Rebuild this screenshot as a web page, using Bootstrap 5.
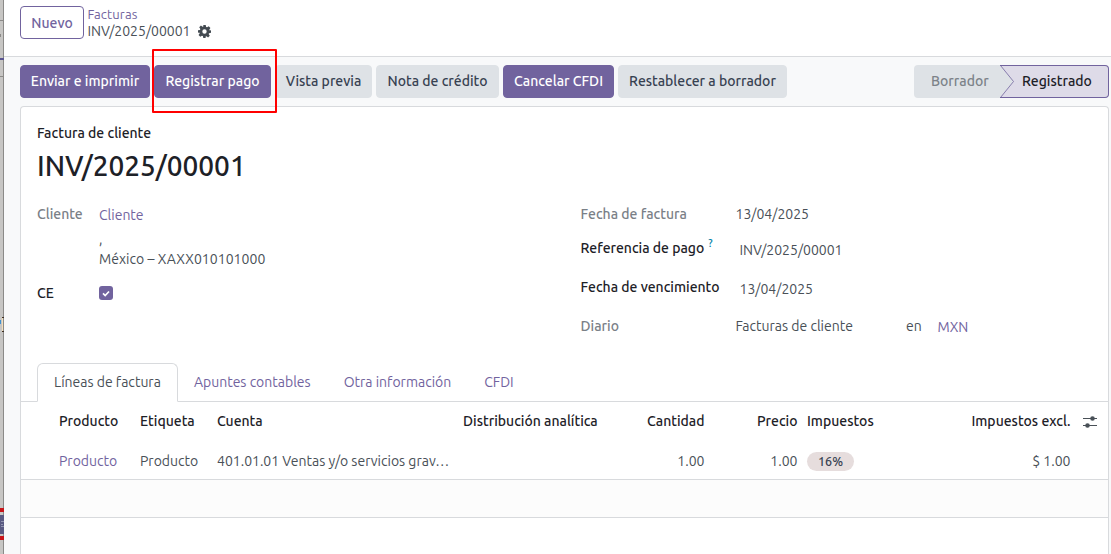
<!DOCTYPE html>
<html lang="es">
<head>
<meta charset="utf-8">
<meta name="viewport" content="width=device-width, initial-scale=1">
<title>INV/2025/00001</title>
<link href="https://cdn.jsdelivr.net/npm/bootstrap@5.3.0/dist/css/bootstrap.min.css" rel="stylesheet">
<style>
:root{--brand:#71639e;--line:#d8dadd;--muted:#495057}
body{font-family:Ubuntu,"Noto Sans","Open Sans",sans-serif;font-size:14px;line-height:21px;color:var(--muted);height:554px;overflow:hidden;background:#f8f9fa}
a{color:var(--brand);text-decoration:none}
svg{display:block;flex:none}
.strip{width:4px;height:554px}
.topbar{height:57px;border-bottom:1px solid var(--line);padding:6px 16px}
.crumbs{line-height:16px;padding:1px 0 0 3.5px}
.crumb-up{font-size:13px;line-height:15px;padding-bottom:1px;letter-spacing:.15px}
.gear{margin-left:7px}
.btn{--bs-btn-padding-x:0;--bs-btn-padding-y:0;--bs-btn-font-size:14px;--bs-btn-line-height:21px;--bs-btn-border-radius:4px;height:33px;font-weight:500}
.btn-new{--bs-btn-color:#71639e;--bs-btn-border-color:#71639e;--bs-btn-bg:#fff;width:64px;padding-top:1px}
.btn-brand{--bs-btn-color:#fff;--bs-btn-bg:#71639e;--bs-btn-border-color:#71639e}
.btn-grey{--bs-btn-color:#374151;--bs-btn-bg:#dee2e6;--bs-btn-border-color:#dee2e6}
.actions{padding:8px 2px 8px 16px;height:49px}
.w130{width:130px}.w117{width:117px}.w97{width:97px}.w123{width:123px}.w111{width:111px}.w169{width:169px}
.focusbox{left:-2px;top:-16px;width:125px;height:64px;border:2px solid #f00;border-radius:1px;z-index:3}
.step-off{width:86px;background:#dee2e6;border-radius:4px 0 0 4px;color:#7c8289;padding-left:17px;font-weight:500}
.step-on{width:95px;border:1px solid var(--brand);border-left:0;border-radius:0 4px 4px 0;background:#dedbe8;color:#1d2127;font-weight:500;padding-left:8px}
.step-off,.step-on{height:33px}
.sheet{margin:0 2px 0 16px;height:460px;border:1px solid var(--line);border-bottom:0;border-radius:4px 4px 0 0;background:#fff}
.ink{color:#1d2127;font-weight:500}
.dim{color:#7a8087;font-weight:500}
.doc-title{font-size:28px;line-height:36px;font-weight:500;color:#1d2127;margin:0}
.head-pad{padding:16px 16px 0}
.form-cols{padding:16px 16px 0;height:175px}
.left-col{width:543.5px}
.lab-l{width:62px;flex:none}
.lab-r{width:155px;flex:none}
.frow{height:39px}
.r1{height:34px}
.nudge{padding-top:2px}
.street{margin-top:3px}
.addr{margin-top:-1px;letter-spacing:.04px}
.ce{margin-top:13px}
.journal{width:170.5px}
.inword{width:31.5px}
.cur,.partner{padding-top:1px}
.qm{color:#0180a5;font-size:10.5px;top:-6px}
.tick{width:14px;height:14px;border-radius:3px;background:var(--brand);margin-top:-1px}
.nav-tabs{--bs-nav-tabs-border-color:#d8dadd;--bs-nav-tabs-link-active-border-color:#d8dadd #d8dadd #fff;--bs-nav-tabs-link-active-color:#495057;--bs-nav-link-color:#71639e;--bs-nav-link-padding-x:16px;--bs-nav-link-padding-y:8px;height:39px;padding:0 16px;flex-wrap:nowrap}
.nav-tabs .nav-link{height:39px}
.nav-tabs .nav-item{margin-right:-1px}
.lines{table-layout:fixed;--bs-table-color:#495057;--bs-table-bg:transparent;margin:0;width:1087px}
.lines>*>tr>*{padding:0 5px;height:38px;border:0;vertical-align:middle;white-space:nowrap}
.lines>*>tr>.text-end{padding-right:4.5px}
.lines th{font-weight:500;color:#1d2127}
.lines>tbody>tr>td{border-bottom:1px solid var(--line);height:39px;padding-top:4px}
.lines>tfoot>tr>td{background:#fcfcfc;height:38px;border-bottom:1px solid var(--line)}
.opts{margin:3px 0 0 3px}
.tax{display:flex;align-items:center;justify-content:center;width:47px;height:19px;border-radius:10px;background:#e6dddd;color:#374151;font-size:12.5px;font-weight:500}
.cw1{width:33px}.cw2{width:81px}.cw3{width:77px}.cw4{width:246px}.cw5{width:151px}.cw6{width:100px}.cw7{width:93px}.cw8{width:98px}.cw9{width:175px}.cw10{width:33px}
</style>
</head>
<body class="d-flex">
<svg class="strip" width="4" height="554" viewBox="0 0 4 554"><path fill="#c7c6c4" d="M0 0h4v554H0z"/><path fill="#8b8a88" d="M3 0h1v554H3zM0 20h3v1H0zM0 76h3v1H0zM0 34h1v3H0z"/><path fill="#595490" d="M0 58h4v2H0z"/><path fill="#3e91ce" d="M0 320h1v4H0z"/><path fill="#f3dfbb" d="M2 318h1v13H2z"/><path fill="#3e2f23" d="M2 317h2v1H2zM2 331h2v1H2z"/><path fill="#c71519" d="M0 508h4v4H0zM0 536h4v4H0z"/><path fill="#595a82" d="M0 515h4v19H0z"/><path fill="#9194af" d="M1 521h3v1H1zM1 524h2v1H1zM1 526h3v1H1z"/></svg>
<main class="flex-grow-1">
  <header class="topbar bg-white d-flex align-items-start">
    <button class="btn btn-new">Nuevo</button>
    <div class="crumbs">
      <div class="crumb-up"><a href="#">Facturas</a></div>
      <div class="d-flex align-items-center">INV/2025/00001
      <svg class="gear" width="13" height="13" viewBox="0 0 16 16" fill="#434a51"><path fill-rule="evenodd" d="M6.500 0h3l.5 2.400 1.200.5 2-1.400 2.100 2.100-1.300 2 .4 1.200L16 6.500v3l-2.400.5-.5 1.200 1.400 2-2.100 2.100-2-1.400-1.200.5L9.500 16h-3L6 13.600l-1.200-.5-2 1.400L.7 12.400l1.400-2L1.600 9.300 0 9.500v-3l2.400-.5.5-1.200-1.400-2 2.100-2.100 2 1.400 1-.2zM8 5.300a2.700 2.700 0 1 0 0 5.400 2.700 2.700 0 0 0 0-5.400z"/></svg></div>
    </div>
  </header>
  <div class="actions d-flex justify-content-between">
    <div class="d-flex gap-1">
      <button class="btn btn-brand w130">Enviar e imprimir</button>
      <div class="position-relative"><button class="btn btn-brand w117">Registrar pago</button><div class="focusbox position-absolute"></div></div>
      <button class="btn btn-grey w97">Vista previa</button>
      <button class="btn btn-grey w123">Nota de crédito</button>
      <button class="btn btn-brand w111">Cancelar CFDI</button>
      <button class="btn btn-grey w169">Restablecer a borrador</button>
    </div>
    <div class="d-flex">
      <div class="step-off d-flex align-items-center">Borrador</div>
      <svg width="14" height="33" viewBox="0 0 14 33"><path fill="#dedbe8" d="M0 0h14v33H0z"/><path fill="#dee2e6" d="M0 0l14 16.500L0 33z"/><path fill="none" stroke="#71639e" stroke-width=".8" d="M.5.500l13 16L.5 32.500"/><path fill="none" stroke="#71639e" d="M0 .5h14M0 32.500h14"/></svg>
      <div class="step-on d-flex align-items-center">Registrado</div>
    </div>
  </div>
  <section class="sheet">
    <div class="head-pad">
      <div class="ink">Factura de cliente</div>
      <h1 class="doc-title pt-1">INV/2025/00001</h1>
    </div>
    <div class="form-cols d-flex mt-1">
      <div class="left-col">
        <div class="d-flex"><div class="lab-l dim">Cliente</div>
          <div class="partner"><a href="#">Cliente</a><div class="street">,</div><div class="addr">México – XAXX010101000</div></div></div>
        <div class="d-flex align-items-center ce"><div class="lab-l ink">CE</div>
          <div class="tick d-flex align-items-center justify-content-center"><svg width="8" height="7" viewBox="0 0 8 7"><path d="M1 3.300l2.200 2.200L7 1.500" fill="none" stroke="#fff" stroke-width="1.700"/></svg></div></div>
      </div>
      <div>
        <div class="d-flex frow r1"><div class="lab-r dim">Fecha de factura</div><div>13/04/2025</div></div>
        <div class="d-flex frow"><div class="lab-r ink">Referencia de pago<sup class="ms-1 qm">?</sup></div><div class="ps-1 nudge">INV/2025/00001</div></div>
        <div class="d-flex frow"><div class="lab-r ink">Fecha de vencimiento</div><div class="ps-1 nudge">13/04/2025</div></div>
        <div class="d-flex"><div class="lab-r dim">Diario</div><div class="journal">Facturas de cliente</div><div class="inword">en</div><a href="#" class="cur">MXN</a></div>
      </div>
    </div>
    <ul class="nav nav-tabs">
      <li class="nav-item"><a class="nav-link active" href="#">Líneas de factura</a></li>
      <li class="nav-item"><a class="nav-link" href="#">Apuntes contables</a></li>
      <li class="nav-item"><a class="nav-link" href="#">Otra información</a></li>
      <li class="nav-item"><a class="nav-link" href="#">CFDI</a></li>
    </ul>
    <table class="table lines">
      <colgroup><col class="cw1"><col class="cw2"><col class="cw3"><col class="cw4"><col class="cw5"><col class="cw6"><col class="cw7"><col class="cw8"><col class="cw9"><col class="cw10"></colgroup>
      <thead><tr><th></th><th>Producto</th><th>Etiqueta</th><th>Cuenta</th><th>Distribución analítica</th><th class="text-end">Cantidad</th><th class="text-end">Precio</th><th>Impuestos</th><th class="text-end">Impuestos excl.</th>
        <th><svg class="opts" width="14" height="13" viewBox="1 0 14 13"><path d="M1 2.500h14M1 9.500h14" stroke="#495057" stroke-width="1.200"/><circle cx="10.500" cy="2.500" r="2.300" fill="#495057"/><circle cx="5.500" cy="9.500" r="2.300" fill="#495057"/></svg></th></tr></thead>
      <tbody><tr><td></td><td><a href="#">Producto</a></td><td>Producto</td><td>401.01.01 Ventas y/o servicios grav…</td><td></td><td class="text-end">1.00</td><td class="text-end">1.00</td><td><span class="tax">16%</span></td><td class="text-end">$ 1.00</td><td></td></tr></tbody>
      <tfoot><tr><td colspan="10"></td></tr></tfoot>
    </table>
  </section>
</main>
<script src="https://cdn.jsdelivr.net/npm/bootstrap@5.3.0/dist/js/bootstrap.bundle.min.js"></script>
</body>
</html>
